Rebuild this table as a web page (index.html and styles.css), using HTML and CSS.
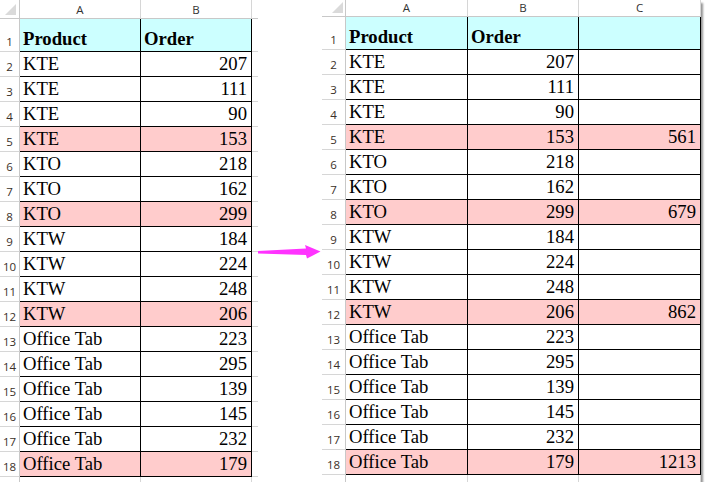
FILE: index.html
```html
<!DOCTYPE html>
<html>
<head>
<meta charset="utf-8">
<link rel="stylesheet" href="styles.css">
</head>
<body>
<div class="frame">
  <div class="sheet left">
    <div class="c corner"><svg width="11" height="11" viewBox="0 0 11 11"><polygon points="0,11 11,0 11,11" fill="#dadada"/></svg></div>
    <div class="c ch">A</div><div class="c ch">B</div><div class="c ch x"></div>

    <div class="c rn">1</div><div class="c d t hd b">Product</div><div class="c d t hd b">Order</div><div class="c x"></div>
    <div class="c rn">2</div><div class="c d t">KTE</div><div class="c d n">207</div><div class="c x"></div>
    <div class="c rn">3</div><div class="c d t">KTE</div><div class="c d n">111</div><div class="c x"></div>
    <div class="c rn">4</div><div class="c d t">KTE</div><div class="c d n">90</div><div class="c x"></div>
    <div class="c rn">5</div><div class="c d t pk">KTE</div><div class="c d n pk">153</div><div class="c x"></div>
    <div class="c rn">6</div><div class="c d t">KTO</div><div class="c d n">218</div><div class="c x"></div>
    <div class="c rn">7</div><div class="c d t">KTO</div><div class="c d n">162</div><div class="c x"></div>
    <div class="c rn">8</div><div class="c d t pk">KTO</div><div class="c d n pk">299</div><div class="c x"></div>
    <div class="c rn">9</div><div class="c d t">KTW</div><div class="c d n">184</div><div class="c x"></div>
    <div class="c rn">10</div><div class="c d t">KTW</div><div class="c d n">224</div><div class="c x"></div>
    <div class="c rn">11</div><div class="c d t">KTW</div><div class="c d n">248</div><div class="c x"></div>
    <div class="c rn">12</div><div class="c d t pk">KTW</div><div class="c d n pk">206</div><div class="c x"></div>
    <div class="c rn">13</div><div class="c d t">Office Tab</div><div class="c d n">223</div><div class="c x"></div>
    <div class="c rn">14</div><div class="c d t">Office Tab</div><div class="c d n">295</div><div class="c x"></div>
    <div class="c rn">15</div><div class="c d t">Office Tab</div><div class="c d n">139</div><div class="c x"></div>
    <div class="c rn">16</div><div class="c d t">Office Tab</div><div class="c d n">145</div><div class="c x"></div>
    <div class="c rn">17</div><div class="c d t">Office Tab</div><div class="c d n">232</div><div class="c x"></div>
    <div class="c rn">18</div><div class="c d t pk">Office Tab</div><div class="c d n pk">179</div><div class="c x"></div>
    <div class="c rn"></div><div class="c"></div><div class="c"></div><div class="c x"></div>
  </div>

  <div class="gap">
    <svg class="arrow" width="64" height="16" viewBox="0 0 64 16"><polygon points="0,7 48,4.6 47,1 62.5,7.6 49,14.5 48,11 0,9.4" fill="#ff33ff"/></svg>
  </div>

  <div class="sheet right">
    <div class="c corner rc"><svg width="11" height="11" viewBox="0 0 11 11"><polygon points="0,11 11,0 11,11" fill="#dadada"/></svg></div>
    <div class="c ch">A</div><div class="c ch">B</div><div class="c ch">C</div>

    <div class="c rn">1</div><div class="c d t hd b">Product</div><div class="c d t hd b">Order</div><div class="c d hd"></div>
    <div class="c rn">2</div><div class="c d t">KTE</div><div class="c d n">207</div><div class="c d"></div>
    <div class="c rn">3</div><div class="c d t">KTE</div><div class="c d n">111</div><div class="c d"></div>
    <div class="c rn">4</div><div class="c d t">KTE</div><div class="c d n">90</div><div class="c d"></div>
    <div class="c rn">5</div><div class="c d t pk">KTE</div><div class="c d n pk">153</div><div class="c d n pk">561</div>
    <div class="c rn">6</div><div class="c d t">KTO</div><div class="c d n">218</div><div class="c d"></div>
    <div class="c rn">7</div><div class="c d t">KTO</div><div class="c d n">162</div><div class="c d"></div>
    <div class="c rn">8</div><div class="c d t pk">KTO</div><div class="c d n pk">299</div><div class="c d n pk">679</div>
    <div class="c rn">9</div><div class="c d t">KTW</div><div class="c d n">184</div><div class="c d"></div>
    <div class="c rn">10</div><div class="c d t">KTW</div><div class="c d n">224</div><div class="c d"></div>
    <div class="c rn">11</div><div class="c d t">KTW</div><div class="c d n">248</div><div class="c d"></div>
    <div class="c rn">12</div><div class="c d t pk">KTW</div><div class="c d n pk">206</div><div class="c d n pk">862</div>
    <div class="c rn">13</div><div class="c d t">Office Tab</div><div class="c d n">223</div><div class="c d"></div>
    <div class="c rn">14</div><div class="c d t">Office Tab</div><div class="c d n">295</div><div class="c d"></div>
    <div class="c rn">15</div><div class="c d t">Office Tab</div><div class="c d n">139</div><div class="c d"></div>
    <div class="c rn">16</div><div class="c d t">Office Tab</div><div class="c d n">145</div><div class="c d"></div>
    <div class="c rn">17</div><div class="c d t">Office Tab</div><div class="c d n">232</div><div class="c d"></div>
    <div class="c rn">18</div><div class="c d t pk">Office Tab</div><div class="c d n pk">179</div><div class="c d n pk">1213</div>
    <div class="c rn"></div><div class="c"></div><div class="c"></div><div class="c"></div>
  </div>
</div>
</body>
</html>
```

FILE: styles.css
```css
html, body {
  margin: 0;
  padding: 0;
  background: #ffffff;
}

.frame {
  display: flex;
  width: 701px;
  height: 482px;
  overflow: hidden;
  background: #ffffff;
  box-shadow: 2px 3px 2px rgba(0, 0, 0, 0.42);
}

.sheet {
  display: grid;
  align-content: start;
  font-family: "Liberation Serif", "Times New Roman", serif;
  color: #000;
}

.sheet.left {
  width: 258px;
  grid-template-columns: 20px 121px 111px 6px;
  grid-template-rows: 19px 33px repeat(17, 25px) 25px;
}

.sheet.right {
  width: 379px;
  grid-template-columns: 24px 122px 111px 122px;
  grid-template-rows: 17px 33px repeat(17, 25px) 25px;
}

.gap {
  width: 64px;
  flex: none;
  display: flex;
  flex-direction: column;
}

.arrow {
  display: block;
  margin-top: 244px;
}

.c {
  box-sizing: border-box;
  border-right: 1px solid #d6d6d6;
  border-bottom: 1px solid #d6d6d6;
  display: flex;
  align-items: flex-end;
  font-size: 18.67px;
  line-height: 18.67px;
  padding-bottom: 2px;
  white-space: nowrap;
  overflow: hidden;
}

.c.x {
  border-right: none;
}

.corner {
  justify-content: flex-end;
  padding: 0 3px 3px 0;
  border-bottom-color: #c8c8c8;
  border-right-color: #c8c8c8;
}

.corner svg {
  display: block;
}

.corner.rc {
  padding: 0 2px 3px 0;
}

.ch {
  justify-content: center;
  font-family: "Open Sans", "Liberation Sans", sans-serif;
  font-size: 11.5px;
  line-height: 11.5px;
  padding-bottom: 2.5px;
  color: #333;
  border-bottom-color: #c8c8c8;
}

.rn {
  justify-content: center;
  font-family: "Open Sans", "Liberation Sans", sans-serif;
  font-size: 11.5px;
  line-height: 11.5px;
  padding-bottom: 4px;
  color: #3a3028;
  border-right-color: #c8c8c8;
}

.d {
  border-right-color: #000;
  border-bottom-color: #000;
}

.t {
  justify-content: flex-start;
  padding-left: 3px;
}

.n {
  justify-content: flex-end;
  padding-right: 4px;
}

.b {
  font-weight: bold;
}

.hd {
  background: #ccffff;
}

.pk {
  background: #ffcccc;
}
```
